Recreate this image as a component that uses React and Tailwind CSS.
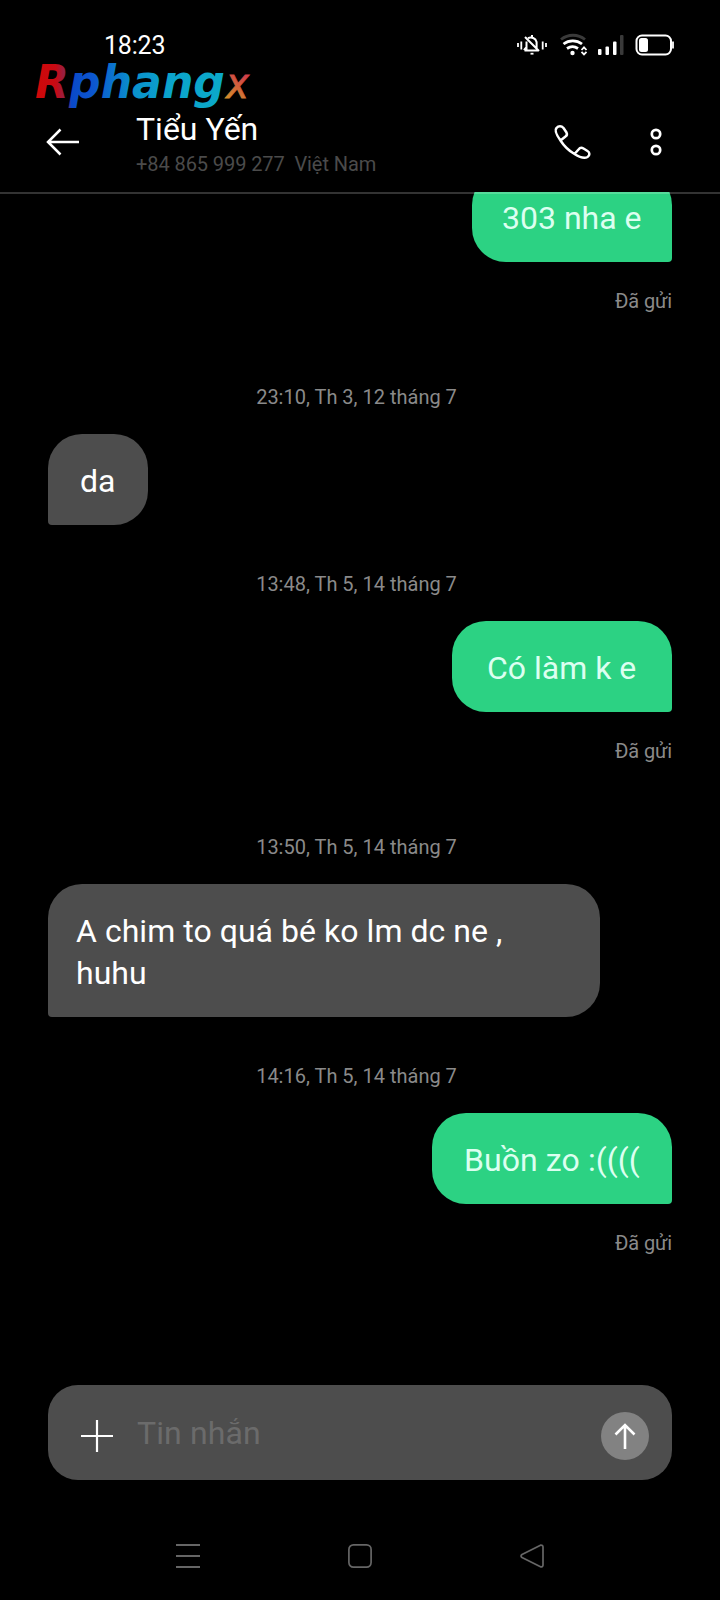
import React from "react";

const messages = [
  { id: 1, mine: true, lines: ["303 nha e"], box: "w-[200px] pl-[30px]", sent: true },
  { id: 2, time: "23:10, Th 3, 12 tháng 7", lines: ["da"], box: "w-[100px] pl-[32px]" },
  { id: 3, time: "13:48, Th 5, 14 tháng 7", mine: true, lines: ["Có làm k e"], box: "w-[220px] pl-[35px]", sent: true },
  { id: 4, time: "13:50, Th 5, 14 tháng 7", lines: ["A chim to quá bé ko lm dc ne ,", "huhu"], box: "w-[552px] pl-[28px] tracking-[0.04px]" },
  { id: 5, time: "14:16, Th 5, 14 tháng 7", mine: true, lines: ["Buồn zo :(((("], box: "w-[240px] pl-[32px] tracking-[0.08px]", sent: true },
];

function StatusBar() {
  return (
    <div className="flex h-[62px] items-start justify-between pl-[104px] pr-[44px]">
      <span className="mt-[31px] text-[25px] leading-[30px] tracking-[-0.2px] text-white">18:23</span>
      <svg className="mt-[30px]" width="164" height="30" viewBox="512 30 164 30" fill="none" stroke="#fff">
        <g strokeWidth="1.8">
          <path d="M518 43v4M521.3 41.500v8M542.700 41.500v8M546 43v4" />
          <path d="M524.500 50.500h14M526.500 50v-8.500M528 38.200a6 6 0 0 1 8.600 3.800v6M532 35v2M524 50.200l2.600-3.200M525 37l14 14" strokeWidth="2" strokeLinejoin="round" />
          <path d="M530.500 53.700h3" />
        </g>
        <g strokeWidth="2.800">
          <path d="M561 39.500a19 19 0 0 1 24 0" stroke="#3a3a3a" />
          <path d="M563.500 44a15 15 0 0 1 18.500 0" />
          <path d="M567 48.500a10 10 0 0 1 11 0" />
        </g>
        <circle cx="572.500" cy="53" r="2.200" fill="#fff" stroke="none" />
        <path d="M581.500 50l2.500-2.600 2.500 2.600M581.500 51.800l2.500 2.600 2.500-2.600" strokeWidth="1.800" />
        <g stroke="none" fill="#fff">
          <rect x="598" y="49" width="3.500" height="6" rx="1" />
          <rect x="605.500" y="46.500" width="3.500" height="8.500" rx="1" />
          <rect x="613" y="41.500" width="3.500" height="13.500" rx="1" />
          <rect x="620" y="35" width="3.500" height="20" rx="1" fill="#3a3a3a" />
          <rect x="639" y="38" width="9" height="14" rx="2.500" />
        </g>
        <rect x="636.500" y="35.500" width="34.500" height="19" rx="5.500" strokeWidth="2" />
        <path d="M673 41.500v7" strokeWidth="1.800" />
      </svg>
    </div>
  );
}

function Watermark() {
  return (
    <svg className="absolute left-[32px] top-[60px] overflow-visible" width="224" height="50" viewBox="32 60 224 50">
      <defs>
        <linearGradient id="mark" gradientUnits="userSpaceOnUse" x1="37" y1="0" x2="227" y2="0">
          <stop offset="0" stopColor="#d00808" />
          <stop offset="0.1" stopColor="#c80a14" />
          <stop offset="0.16" stopColor="#802858" />
          <stop offset="0.18" stopColor="#0a49c8" />
          <stop offset="0.3" stopColor="#0c57cf" />
          <stop offset="0.5" stopColor="#0a90cc" />
          <stop offset="0.7" stopColor="#0ba4cb" />
          <stop offset="1" stopColor="#0ba9c9" />
        </linearGradient>
        <linearGradient id="markEnd" x1="0.6" y1="0.3" x2="0.4" y2="1">
          <stop offset="0" stopColor="#d0404a" />
          <stop offset="1" stopColor="#d49a24" />
        </linearGradient>
      </defs>
      <g fontFamily="DejaVu Sans, sans-serif" fontWeight="700" fontStyle="italic">
        <text x="35" y="98" fontSize="46" textLength="190" lengthAdjust="spacingAndGlyphs" fill="url(#mark)">Rphang</text>
        <text x="226" y="98" fontSize="43" textLength="23" lengthAdjust="spacingAndGlyphs" fontWeight="400" fill="url(#markEnd)" stroke="url(#markEnd)" strokeWidth="0.8">x</text>
      </g>
    </svg>
  );
}

function Header() {
  return (
    <header className="flex h-[130px] items-start text-white">
      <svg className="ml-[44px] mt-[64px]" width="40" height="32" viewBox="44 126 40 32" fill="none" stroke="#fff" strokeWidth="2.500">
        <path d="M79 142H47.500M60.500 129.500L48 142l12.500 12.500" />
      </svg>
      <div className="ml-[52px] mt-[46px] grow">
        <h1 className="text-[32px] leading-[42px]">Tiểu Yến</h1>
        <p className="mt-[2px] whitespace-pre text-[20px] leading-[24px] tracking-[-0.08px] text-[#4b4b4b]">+84 865 999 277  Việt Nam</p>
      </div>
      <svg className="mt-[58px]" width="120" height="44" viewBox="550 120 120 44" fill="none" stroke="#fff" strokeWidth="2.500" strokeLinejoin="round">
        <path d="M560.500 140.500C556.500 135 554.500 130 556.500 128C558.500 125.500 561.500 125.500 563.500 128L566.500 132.500C567.500 134.500 567 135.500 565.500 136.500ZM560.500 140.500C564 146 569 150.800 574.500 154M574.500 154C580 157.500 584 158.800 587.500 157C590 155.500 590 152.500 587.500 151L583.500 148.500C581.500 147.200 580 147.500 578.500 149.500Z" />
        <circle cx="656" cy="134" r="4.200" strokeWidth="2.700" />
        <circle cx="656" cy="150" r="4.200" strokeWidth="2.700" />
      </svg>
      <div className="w-[50px]" />
    </header>
  );
}

function Message({ time, mine, lines, box, sent }) {
  return (
    <div className="flex flex-col">
      {time && <time className="mb-[25px] pr-[7px] text-center text-[20px] leading-[24px] text-[#8a8a8a]">{time}</time>}
      <div
        className={`${box} whitespace-nowrap pb-[23px] pt-[26px] text-[32px] leading-[42px] ${
          mine
            ? "self-end rounded-[34px] rounded-br-[4px] bg-[#2cd283] text-[#dcfff0]"
            : "self-start rounded-[34px] rounded-bl-[4px] bg-[#4d4d4d] text-white"
        }`}
      >
        {lines.map((line) => (
          <p key={line}>{line}</p>
        ))}
      </div>
      {sent ? (
        <span className="mb-[72px] mt-[27px] self-end text-[20px] leading-[24px] tracking-[-0.12px] text-[#8a8a8a]">Đã gửi</span>
      ) : (
        <div className="h-[47px]" />
      )}
    </div>
  );
}

function Composer() {
  return (
    <div className="mx-[48px] flex h-[95px] items-center rounded-[30px] bg-[#4d4d4d] pl-[32px] pr-[23px] pt-[7px]">
      <svg width="34" height="34" viewBox="0 0 34 34" stroke="#fff" strokeWidth="2.200">
        <path d="M1 17h32M17 1v32" />
      </svg>
      <span className="-mt-[6px] ml-[23px] grow text-[32px] leading-[42px] tracking-[0.1px] text-[#6b6b6b]">Tin nhắn</span>
      <div className="flex size-[48px] items-center justify-center rounded-full bg-[#828282]">
        <svg width="24" height="28" viewBox="0 0 24 28" fill="none" stroke="#fff" strokeWidth="2.600">
          <path d="M12 27V3M2.500 12.500L12 3l9.500 9.500" />
        </svg>
      </div>
    </div>
  );
}

function NavBar() {
  return (
    <nav className="flex h-[120px] justify-between px-[175px] pt-[63px]">
      <svg width="26" height="26" viewBox="0 0 26 26" stroke="#666" strokeWidth="2">
        <path d="M1 2h24M1 13h24M1 24h24" />
      </svg>
      <svg width="26" height="26" viewBox="0 0 26 26" fill="none" stroke="#666" strokeWidth="1.700">
        <rect x="1.900" y="1.900" width="22.200" height="22.200" rx="4.500" />
      </svg>
      <svg width="26" height="26" viewBox="0 0 26 26" fill="none" stroke="#666" strokeWidth="1.700" strokeLinejoin="round">
        <path d="M21.500 2.200L3 11.500Q1 13 3 14.500L21.500 23.800Q24 24 24 22V4Q24 2 21.500 2.200Z" />
      </svg>
    </nav>
  );
}

export default function App() {
  return (
    <div className="relative flex h-[1600px] w-[720px] flex-col overflow-hidden bg-black font-[Roboto,'Noto_Sans',sans-serif]">
      <StatusBar />
      <Header />
      <main className="relative h-[1193px] overflow-hidden px-[48px]">
        <div className="-mt-[21px]">
          {messages.map((m) => (
            <Message key={m.id} {...m} />
          ))}
        </div>
        <div className="absolute inset-x-0 top-0 h-[2px] bg-white/20" />
      </main>
      <Composer />
      <NavBar />
      <Watermark />
    </div>
  );
}
